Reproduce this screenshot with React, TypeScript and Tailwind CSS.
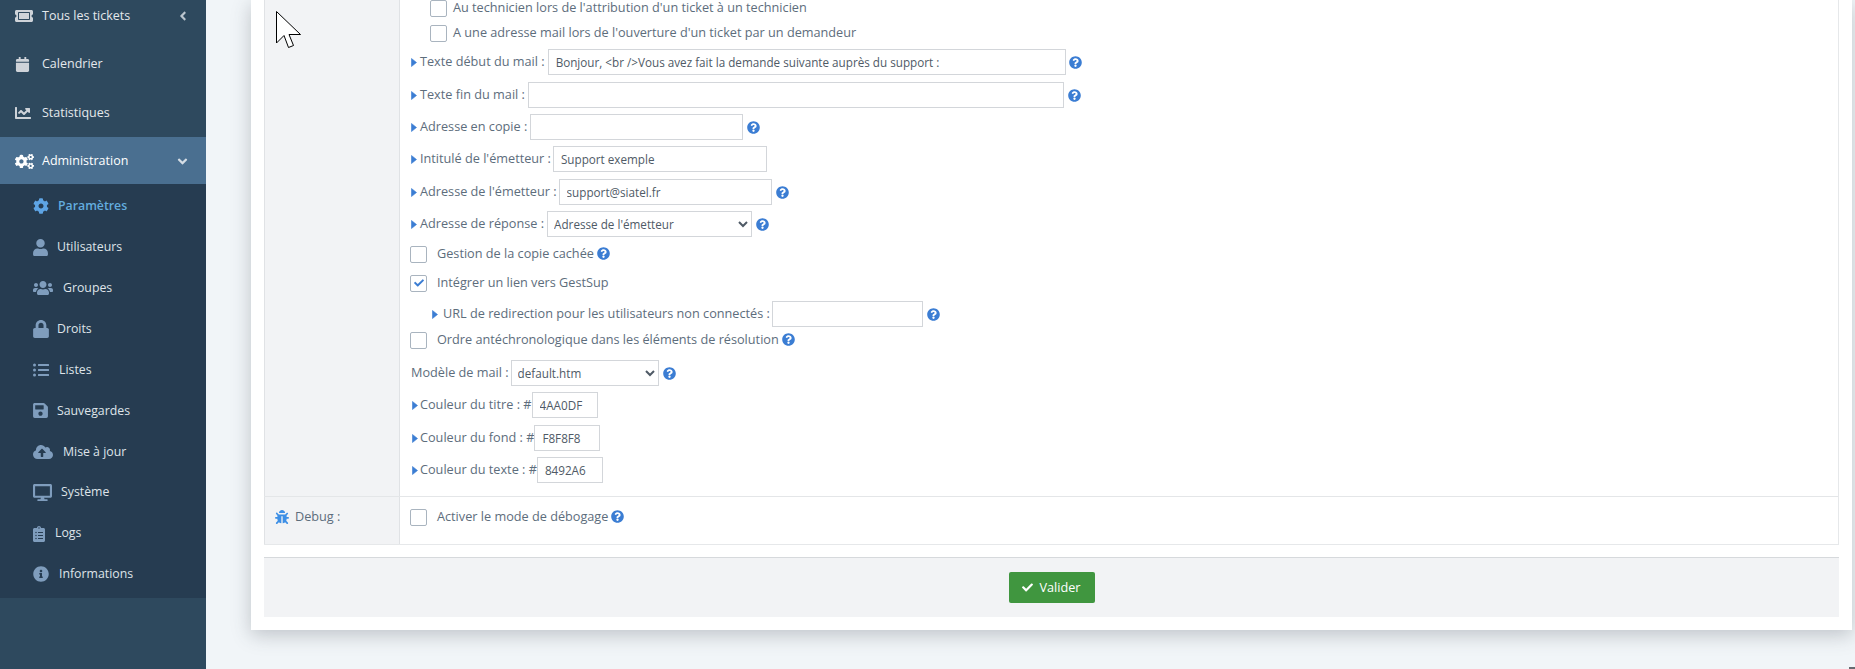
import React from "react";
import {
  FaAngleDown,
  FaAngleLeft,
  FaBug,
  FaCalendar,
  FaChartLine,
  FaCheck,
  FaClipboardList,
  FaCloudUploadAlt,
  FaCog,
  FaCogs,
  FaDesktop,
  FaInfoCircle,
  FaListUl,
  FaLock,
  FaQuestionCircle,
  FaSave,
  FaTicketAlt,
  FaUser,
  FaUsers,
} from "react-icons/fa";

const subItems = [
  { label: "Paramètres", icon: FaCog, size: "w-[16px] h-[16px]", gap: "w-[25px]", active: true },
  { label: "Utilisateurs", icon: FaUser, size: "w-[15px] h-[17px]", gap: "w-[24px]" },
  { label: "Groupes", icon: FaUsers, size: "w-[20px] h-[16px]", gap: "w-[30px]" },
  { label: "Droits", icon: FaLock, size: "w-[16px] h-[18px]", gap: "w-[24px]" },
  { label: "Listes", icon: FaListUl, size: "w-[16px] h-[16px]", gap: "w-[26px]" },
  { label: "Sauvegardes", icon: FaSave, size: "w-[15px] h-[17px]", gap: "w-[24px]" },
  { label: "Mise à jour", icon: FaCloudUploadAlt, size: "w-[20px] h-[16px]", gap: "w-[30px]" },
  { label: "Système", icon: FaDesktop, size: "w-[19px] h-[17px]", gap: "w-[28px]" },
  { label: "Logs", icon: FaClipboardList, size: "w-[12px] h-[16px]", gap: "w-[22px]" },
  { label: "Informations", icon: FaInfoCircle, size: "w-[16px] h-[16px]", gap: "w-[26px]" },
];

function Help() {
  return <FaQuestionCircle className="text-[13px] text-[#3b7dd3] shrink-0" />;
}

function Caret() {
  return (
    <svg width="6" height="9" viewBox="0 0 6 9" className="shrink-0">
      <path d="M0.5 0.5 L5.5 4.5 L0.5 8.5 Z" fill="#3b7dd3" stroke="#3b7dd3" strokeWidth="0.6" strokeLinejoin="round" />
    </svg>
  );
}

function Check({ checked }: { checked?: boolean }) {
  return (
    <span className="w-[17px] h-[17px] shrink-0 flex items-center justify-center rounded-[2px] border border-[#a9b4bf] bg-white">
      {checked && <FaCheck className="text-[10px] text-[#3b7dd3]" />}
    </span>
  );
}

function Input({ value = "", className }: { value?: string; className: string }) {
  return (
    <input
      readOnly
      value={value}
      className={`h-[26px] shrink-0 border border-[#d3d6da] bg-white px-[7px] text-[11.7px] text-[#4f5a66] outline-none ${className}`}
    />
  );
}

function Select({ value, className }: { value: string; className: string }) {
  return (
    <select
      defaultValue={value}
      className={`h-[26px] shrink-0 rounded-none border border-[#d3d6da] bg-white pl-[2px] text-[11.7px] text-[#4f5a66] outline-none ${className}`}
    >
      <option>{value}</option>
    </select>
  );
}

export default function App() {
  return (
    <div className="relative flex h-[669px] w-[1855px] overflow-hidden bg-[#f1f5f8] font-['Open_Sans',sans-serif] text-[12.7px] text-[#5d6d7c]">
      <aside className="w-[206px] shrink-0 bg-[#2e495e] text-[12.5px] text-[#e4e8ec]">
        <div className="flex h-[39px] items-center pb-[8px] pl-[15px] pr-[16px]">
          <FaTicketAlt className="w-[18px] text-[18px] text-[#ced3d9]" />
          <span className="ml-[9px] translate-y-[1px]">Tous les tickets</span>
          <FaAngleLeft className="ml-auto text-[14px] text-[#bcc6cf]" />
        </div>
        <div className="flex h-[49px] items-center pl-[15px] pt-[1px]">
          <FaCalendar className="text-[15px] text-[#ced3d9]" />
          <span className="ml-[12px]">Calendrier</span>
        </div>
        <div className="flex h-[49px] items-center pl-[15px] pt-[1px]">
          <FaChartLine className="text-[16px] text-[#ced3d9]" />
          <span className="ml-[11px]">Statistiques</span>
        </div>
        <div className="flex h-[47px] items-center bg-[#4a6f90] pl-[15px] pr-[16px] pt-[1px] text-white">
          <FaCogs className="text-[19px]" />
          <span className="ml-[8px]">Administration</span>
          <FaAngleDown className="ml-auto text-[15px] text-[#d5dde5]" />
        </div>
        <div className="flex h-[414px] flex-col bg-[#263c51] pt-[2px]">
          {subItems.map((item) => (
            <div key={item.label} className="flex h-[40.9px] items-center pl-[33px] text-[12.3px]">
              <span className={`flex shrink-0 ${item.gap}`}>
                <item.icon className={`${item.size} ${item.active ? "text-[#5ea4e4]" : "text-[#7f9dbd]"}`} />
              </span>
              <span className={item.active ? "font-semibold text-[#63addf]" : "text-[#dfe4e9]"}>{item.label}</span>
            </div>
          ))}
        </div>
      </aside>

      <main className="flex-1">
        <div className="ml-[45px] h-[630px] w-[1601px] bg-white px-[13px] shadow-[0_5px_18px_rgba(60,70,80,0.28)]">
          <div className="border-b border-r border-[#e6e8ea]">
            <div className="flex h-[497px] border-b border-[#e4e6e8]">
              <div className="w-[136px] shrink-0 border-x border-[#e0e2e5] bg-[#f2f3f5]" />
              <div className="flex-1">
                <div className="flex h-[16px] items-center gap-[6px] pl-[30px]">
                  <Check />
                  <span>Au technicien lors de l'attribution d'un ticket à un technicien</span>
                </div>
                <div className="mt-[7px] flex h-[20px] items-center gap-[6px] pl-[30px]">
                  <Check />
                  <span>A une adresse mail lors de l'ouverture d'un ticket par un demandeur</span>
                </div>
                <div className="mt-[6px] flex h-[26px] items-center pl-[11px]">
                  <Caret />
                  <span className="ml-[3px] mr-[3px]">Texte début du mail :</span>
                  <Input value="Bonjour, <br />Vous avez fait la demande suivante auprès du support :" className="w-[518px]" />
                  <span className="ml-[3px]"><Help /></span>
                </div>
                <div className="mt-[7px] flex h-[26px] items-center pl-[11px]">
                  <Caret />
                  <span className="ml-[3px] mr-[3px]">Texte fin du mail :</span>
                  <Input className="w-[536px]" />
                  <span className="ml-[4px]"><Help /></span>
                </div>
                <div className="mt-[6px] flex h-[26px] items-center pl-[11px]">
                  <Caret />
                  <span className="ml-[3px] mr-[3px]">Adresse en copie :</span>
                  <Input className="w-[213px]" />
                  <span className="ml-[4px]"><Help /></span>
                </div>
                <div className="mt-[6px] flex h-[26px] items-center pl-[11px]">
                  <Caret />
                  <span className="ml-[3px] mr-[2px]">Intitulé de l'émetteur :</span>
                  <Input value="Support exemple" className="w-[214px]" />
                </div>
                <div className="mt-[7px] flex h-[26px] items-center pl-[11px]">
                  <Caret />
                  <span className="ml-[3px] mr-[2px]">Adresse de l'émetteur :</span>
                  <Input value="support@siatel.fr" className="w-[213px]" />
                  <span className="ml-[4px]"><Help /></span>
                </div>
                <div className="mt-[6px] flex h-[26px] items-center pl-[11px]">
                  <Caret />
                  <span className="ml-[3px] mr-[3px]">Adresse de réponse :</span>
                  <Select value="Adresse de l'émetteur" className="w-[205px]" />
                  <span className="ml-[4px]"><Help /></span>
                </div>
                <div className="mt-[7px] flex h-[20px] items-center gap-[10px] pl-[10px]">
                  <Check />
                  <span className="flex items-center gap-[3px]">Gestion de la copie cachée <Help /></span>
                </div>
                <div className="mt-[9px] flex h-[20px] items-center gap-[10px] pl-[10px]">
                  <Check checked />
                  <span>Intégrer un lien vers GestSup</span>
                </div>
                <div className="mt-[8px] flex h-[26px] items-center pl-[32px]">
                  <Caret />
                  <span className="ml-[5px] mr-[2px]">URL de redirection pour les utilisateurs non connectés :</span>
                  <Input className="w-[151px]" />
                  <span className="ml-[4px]"><Help /></span>
                </div>
                <div className="mt-[3px] flex h-[20px] items-center gap-[10px] pl-[10px]">
                  <Check />
                  <span className="flex items-center gap-[3px]">Ordre antéchronologique dans les éléments de résolution <Help /></span>
                </div>
                <div className="mt-[10px] flex h-[26px] items-center pl-[11px]">
                  <span className="mr-[2px]">Modèle de mail :</span>
                  <Select value="default.htm" className="w-[148px]" />
                  <span className="ml-[4px]"><Help /></span>
                </div>
                <div className="mt-[6px] flex h-[26px] items-center pl-[12px]">
                  <Caret />
                  <span className="ml-[2px]">Couleur du titre : #</span>
                  <Input value="4AA0DF" className="w-[66px]" />
                </div>
                <div className="mt-[7px] flex h-[26px] items-center pl-[12px]">
                  <Caret />
                  <span className="ml-[2px]">Couleur du fond : #</span>
                  <Input value="F8F8F8" className="w-[66px]" />
                </div>
                <div className="mt-[6px] flex h-[26px] items-center pl-[12px]">
                  <Caret />
                  <span className="ml-[2px]">Couleur du texte : #</span>
                  <Input value="8492A6" className="w-[66px]" />
                </div>
              </div>
            </div>
            <div className="flex h-[47px]">
              <div className="flex w-[136px] shrink-0 items-center gap-[6px] border-x border-[#e0e2e5] bg-[#f2f3f5] pb-[7px] pl-[10px]">
                <FaBug className="text-[14px] text-[#3d8fe6]" />
                <span>Debug :</span>
              </div>
              <div className="flex flex-1 items-center gap-[10px] pb-[7px] pl-[10px]">
                <Check />
                <span className="flex items-center gap-[3px]">Activer le mode de débogage <Help /></span>
              </div>
            </div>
          </div>
          <div className="mt-[12px] flex h-[60px] items-center justify-center border-t border-[#d6d9dc] bg-[#f2f3f5]">
            <button className="flex h-[31px] w-[86px] items-center justify-center gap-[6px] rounded-[2px] bg-[#40963f] text-[12.7px] text-white">
              <FaCheck className="text-[11px]" />
              Valider
            </button>
          </div>
        </div>
      </main>

      {/* mouse pointer caught in the capture */}
      <svg className="absolute left-[274px] top-[9px]" width="30" height="42" viewBox="0 0 30 42">
        <path d="M2.5 2.5 V 34 L 10 26.5 L 14.5 38.5 L 19.5 36.5 L 15 25.5 L 26.5 25.5 Z" fill="#fff" stroke="#000" strokeWidth="1" />
      </svg>
      <div className="absolute bottom-0 right-0 h-[2px] w-[6px] bg-[#666a70]" />
    </div>
  );
}
